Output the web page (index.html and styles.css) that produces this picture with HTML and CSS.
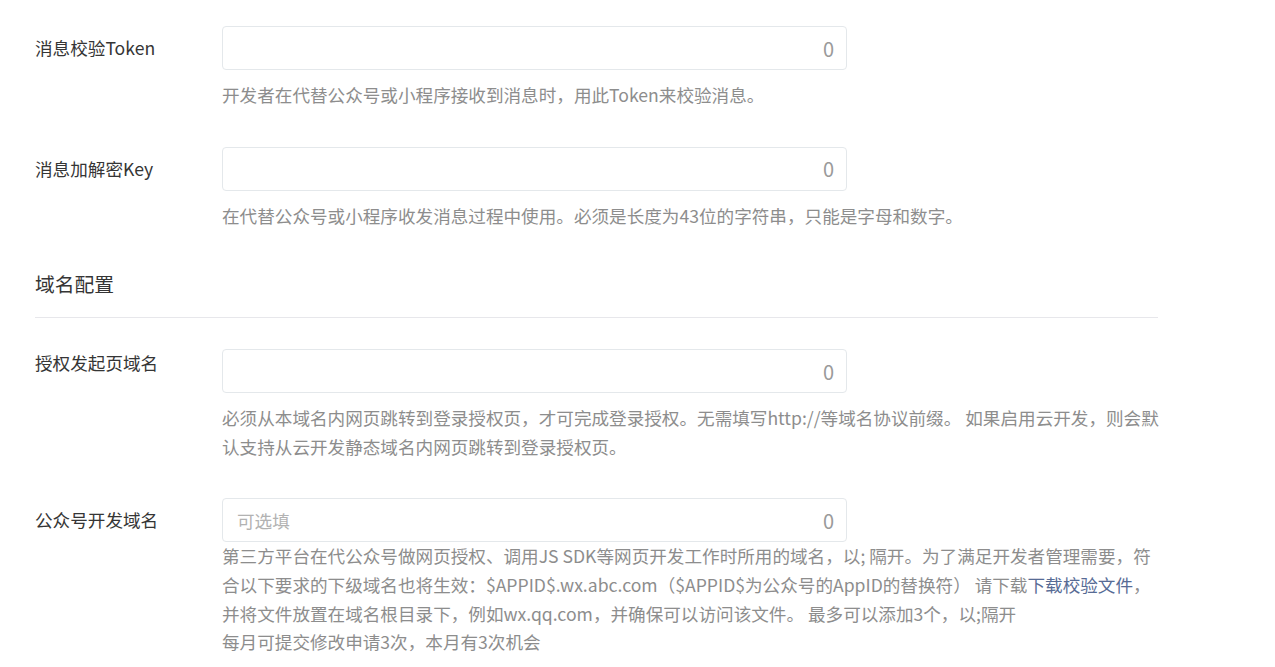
FILE: index.html
```html
<!DOCTYPE html>
<html lang="zh-CN">
  <head>
    <meta charset="UTF-8" />
    <meta name="viewport" content="width=device-width, initial-scale=1.0" />
    <title>开发配置</title>
    <link rel="stylesheet" href="styles.css">
  </head>
  <body>
    <div class="page">
      <div class="form-row">
        <label class="form-label" for="token">消息校验Token</label>
        <div class="form-field">
          <div class="input-box">
            <input type="text" id="token" />
            <span class="counter">0</span>
          </div>
          <p class="form-tip">开发者在代替公众号或小程序接收到消息时，用此Token来校验消息。</p>
        </div>
      </div>

      <div class="form-row">
        <label class="form-label" for="aesKey">消息加解密Key</label>
        <div class="form-field">
          <div class="input-box">
            <input type="text" id="aesKey" />
            <span class="counter">0</span>
          </div>
          <p class="form-tip">在代替公众号或小程序收发消息过程中使用。必须是长度为43位的字符串，只能是字母和数字。</p>
        </div>
      </div>

      <h3 class="section-title">域名配置</h3>

      <div class="form-row">
        <label class="form-label form-label--top" for="authDomain">授权发起页域名</label>
        <div class="form-field">
          <div class="input-box">
            <input type="text" id="authDomain" />
            <span class="counter">0</span>
          </div>
          <p class="form-tip">必须从本域名内网页跳转到登录授权页，才可完成登录授权。无需填写http://等域名协议前缀。 如果启用云开发，则会默认支持从云开发静态域名内网页跳转到登录授权页。</p>
        </div>
      </div>

      <div class="form-row">
        <label class="form-label" for="webDomain">公众号开发域名</label>
        <div class="form-field">
          <div class="input-box">
            <input type="text" id="webDomain" placeholder="可选填" />
            <span class="counter">0</span>
          </div>
          <p class="form-tip form-tip--tight">第三方平台在代公众号做网页授权、调用JS SDK等网页开发工作时所用的域名，以; 隔开。为了满足开发者管理需要，符合以下要求的下级域名也将生效：$APPID$.wx.abc.com（$APPID$为公众号的AppID的替换符） 请下载<a href="#">下载校验文件</a>，并将文件放置在域名根目录下，例如wx.qq.com，并确保可以访问该文件。 最多可以添加3个，以;隔开</p>
          <p class="form-tip form-tip--tight">每月可提交修改申请3次，本月有3次机会</p>
        </div>
      </div>
    </div>
  </body>
</html>
```

FILE: styles.css
```css
/* Basic Reset */
* {
  margin: 0;
  padding: 0;
  box-sizing: border-box;
}

body {
  background-color: #fff;
  color: #353535;
  font-family: "Noto Sans CJK SC", "Noto Sans", sans-serif;
  font-size: 17.6px;
}

.page {
  width: 1162px;
  padding: 26px 0 0 35px;
}

/* Form rows */
.form-row {
  display: flex;
  margin-bottom: 37px;
}

.form-label {
  width: 187px;
  flex-shrink: 0;
  line-height: 44px;
  color: #353535;
}

.form-label--top {
  line-height: 28.6px;
}

.form-field {
  width: 940px;
}

.input-box {
  display: flex;
  align-items: center;
  width: 625px;
  height: 44px;
  padding: 0 12px 0 14px;
  border: 1px solid #e4e8eb;
  border-radius: 4px;
  background-color: #fff;
}

.input-box input {
  flex: 1;
  min-width: 0;
  border: none;
  outline: none;
  font-family: inherit;
  font-size: 17.6px;
  color: #353535;
  background: transparent;
}

.input-box input::placeholder {
  color: #b2b2b2;
}

.counter {
  margin-left: 10px;
  color: #9a9a9a;
  font-size: 20px;
}

.form-tip {
  margin-top: 11px;
  line-height: 28.6px;
  color: #8d8d8d;
}

.form-tip--tight {
  margin-top: 0;
}

.form-tip a {
  color: #576b95;
  text-decoration: none;
}

/* Section title */
.section-title {
  width: 1123px;
  margin-top: 40px;
  margin-bottom: 31px;
  padding-bottom: 19px;
  line-height: 28px;
  font-size: 19.8px;
  font-weight: normal;
  color: #353535;
  border-bottom: 1px solid #e7e7eb;
}
```
